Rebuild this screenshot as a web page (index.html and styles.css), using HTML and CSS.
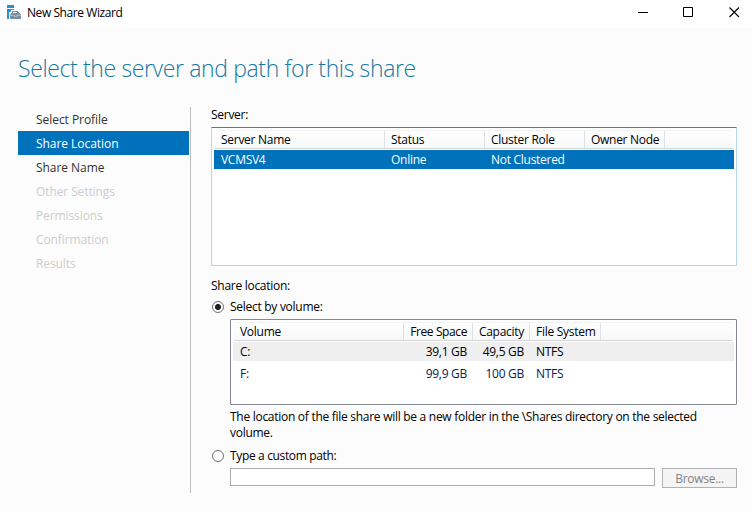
FILE: index.html
```html
<!DOCTYPE html>
<html lang="en">
<head>
<meta charset="utf-8">
<title>New Share Wizard</title>
<link rel="stylesheet" href="styles.css">
</head>
<body>
<header class="titlebar">
  <svg class="app-icon" width="14" height="14" viewBox="0 0 14 14">
    <path fill="#2490d8" d="M0 0h7v3H0zM0 4h7v1H4v2H2v7H0z"/>
    <path fill="#7592a5" d="M5 6h6v1h1v1h1v1h1v1H3V9h1V8h1V7H4V7h1z"/>
    <path fill="#fff" d="M6 7h4v1H6z"/>
    <path fill="#7592a5" d="M3 10h11v4H3z"/>
    <path stroke="#d5e0e6" stroke-width=".6" d="M3 10.300h4M10 10.300h4M7 10.300v1h3v-1" fill="none"/>
  </svg>
  <span class="app-name">New Share Wizard</span>
  <svg class="controls" width="102" height="12" viewBox="0 0 102 12" fill="none" stroke="#000">
    <path d="M0 6.500H10M45.500 1.500h9v9h-9z"/><path stroke-width="1.100" d="M91.500 1.500l9.500 9.500M101 1.500L91.500 11"/>
  </svg>
</header>
<h1 class="heading">Select the server and path for this share</h1>
<div class="layout">
  <nav class="steps">
    <div class="step">Select Profile</div>
    <div class="step current">Share Location</div>
    <div class="step">Share Name</div>
    <div class="step disabled">Other Settings</div>
    <div class="step disabled">Permissions</div>
    <div class="step disabled">Confirmation</div>
    <div class="step disabled">Results</div>
  </nav>
  <main class="content">
    <div class="label server-label">Server:</div>
    <section class="list servers">
      <div class="row head"><span>Server Name</span><span>Status</span><span>Cluster Role</span><span>Owner Node</span></div>
      <div class="row selected"><span>VCMSV4</span><span>Online</span><span>Not Clustered</span><span></span></div>
    </section>
    <div class="label location-label">Share location:</div>
    <div class="option"><i class="radio checked"></i><span class="opt-volume">Select by volume:</span></div>
    <section class="list volumes">
      <div class="row head"><span>Volume</span><span class="num free">Free Space</span><span class="num">Capacity</span><span>File System</span></div>
      <div class="row highlighted"><span>C:</span><span class="num">39,1 GB</span><span class="num">49,5 GB</span><span>NTFS</span></div>
      <div class="row volume"><span>F:</span><span class="num">99,9 GB</span><span class="num">100 GB</span><span>NTFS</span></div>
    </section>
    <p class="note">The location of the file share will be a new folder in the \Shares directory on the selected<br>volume.</p>
    <div class="option"><i class="radio"></i><span class="opt-path">Type a custom path:</span></div>
    <div class="path-row"><div class="path-input"></div><div class="browse">Browse...</div></div>
  </main>
</div>
</body>
</html>
```

FILE: styles.css
```css
* { box-sizing: border-box; }
body {
  margin: 0;
  width: 752px;
  height: 512px;
  overflow: hidden;
  background: #fcfcfc;
  color: #000;
  font: 12px/16px "Open Sans", "Noto Sans", sans-serif;
  letter-spacing: -0.28px;
}
.titlebar {
  display: flex;
  height: 28px;
  padding: 5px 12px 0 7px;
  background: #fff;
}
.app-name { margin-left: 6px; letter-spacing: -0.43px; }
.controls { margin: 1px 0 0 auto; }
.heading {
  margin: 23px 0 0 18px;
  font-size: 23px;
  line-height: 34px;
  font-weight: 300;
  color: #16799f;
  letter-spacing: -0.37px;
  white-space: nowrap;
}
.layout { display: flex; margin: 22px 15px 0 18px; }
.steps {
  width: 173px;
  height: 386px;
  padding-right: 1px;
  border-right: 1px solid #bfbfbf;
}
.step {
  height: 24px;
  padding-left: 18px;
  line-height: 26px;
  color: #333;
  letter-spacing: -0.05px;
}
.step.current { background: #0072bc; color: #fff; }
.step.disabled { color: #cdcdcd; }
.step.disabled { letter-spacing: -0.1px; }
.content { flex: 1; margin-left: 20px; white-space: nowrap; }
.server-label { margin-bottom: 4px; }
.list { background: #fff; border: 1px solid #b5d5e8; padding: 2px; }
.servers { height: 139px; border-top-color: #3c7fb1; border-radius: 1px; }
.row { display: grid; height: 19px; line-height: 19px; }
.servers .row { grid-template-columns: 170px 100px 100px 80px; }
.volumes .row { grid-template-columns: 170px 69px 57px 71px; }
.row span { padding-left: 7px; }
.row .num { padding: 0 5px 0 0; text-align: right; }
.head {
  height: 19px;
  margin: 0 1px 1px;
  border-top: 1px solid #f1f2f4;
  border-bottom: 1px solid #d5d5d5;
  background: linear-gradient(#fff, #f7f8fa);
}
.row.head { line-height: 17px; }
.head span { margin-left: -1px; border-right: 1px solid #dfe1e4; }
.row.head span:first-child { padding-left: 7px; }
.row.head .free { letter-spacing: -0.4px; }
.selected { background: #0072bc; color: #fff; }
.highlighted { background: #efefef; }
.volume { margin-top: 3px; color: #0c2050; }
.location-label { margin-top: 12px; }
.option { display: flex; align-items: center; height: 16px; margin-top: 5px; }
.radio {
  width: 12px;
  height: 12px;
  margin: 0 6px 0 1px;
  border: 1px solid #707070;
  border-radius: 50%;
  background: #fff;
}
.checked { background: radial-gradient(circle, #222 0 2.7px, #fff 3.3px); }
.volumes { height: 86px; margin: 4px 0 0 19px; border-color: #828790; border-radius: 1px; }
.note { margin: 4px 0 0 19px; }
.note + .option { margin-top: 7px; }
.opt-path { letter-spacing: -0.35px; }
.path-row { display: flex; align-items: flex-start; margin: 4px 0 0 19px; }
.path-input { width: 425px; height: 18px; border: 1px solid #abadb3; background: #fff; }
.browse {
  width: 75px;
  height: 20px;
  margin-left: 7px;
  border: 1px solid #adb2b5;
  background: #f4f4f4;
  color: #838383;
  line-height: 20px;
  text-align: center;
}
```
